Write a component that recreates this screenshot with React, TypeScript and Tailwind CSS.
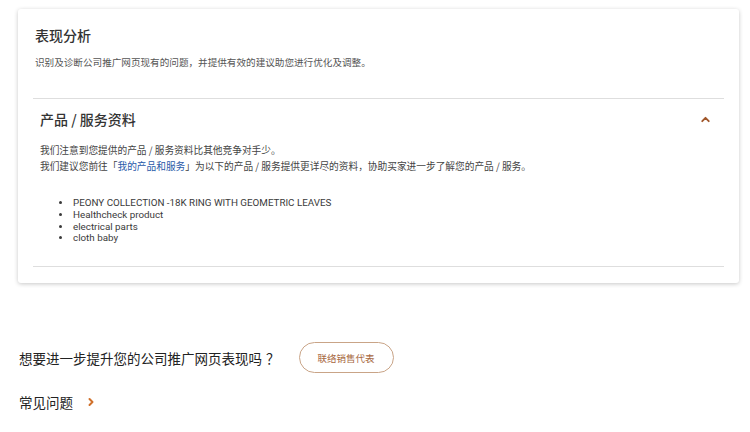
import { ChevronUp, ChevronRight } from "lucide-react";

const PRODUCTS = [
  "PEONY COLLECTION -18K RING WITH GEOMETRIC LEAVES",
  "Healthcheck product",
  "electrical parts",
  "cloth baby",
];

const CJK = "font-['Microsoft_YaHei','Noto_Sans_CJK_SC',sans-serif]";

export default function App() {
  return (
    <div className={`min-h-screen bg-white ${CJK} text-[#333]`}>
      <div className="pl-[18px] pr-[11px] pt-[9px]">
        {/* ── Analysis card ─────────────────────────────── */}
        <section className="rounded-[3px] bg-white px-[15px] pt-[16px] pb-[16px] shadow-[0_1px_4px_rgba(0,0,0,0.22)]">
          <h2 className="pl-[2px] text-[14px] font-medium leading-[20px] text-[#333]">表现分析</h2>
          <p className="mt-[10px] pl-[2px] text-[9.6px] leading-[14px] text-[#555]">
            识别及诊断公司推广网页现有的问题，并提供有效的建议助您进行优化及调整。
          </p>

          <div className="mt-[29px] border-t border-[#dedede]">
            <div className="flex items-center justify-between pt-[10px] pl-[7px] pr-[12px]">
              <h3 className="text-[14px] font-medium leading-[20px] text-[#333]">产品 / 服务资料</h3>
              <ChevronUp className="h-[13px] w-[13px] text-[#a0562a]" strokeWidth={3.5} />
            </div>

            <div className="mt-[13px] pl-[7px] text-[9.7px] leading-[16px] text-[#444]">
              <p>我们注意到您提供的产品 / 服务资料比其他竞争对手少。</p>
              <p>
                我们建议您前往「<span className="text-[#2a5aa8]">我的产品和服务</span>」为以下的产品 / 服务提供更详尽的资料，协助买家进一步了解您的产品 / 服务。
              </p>
            </div>

            <ul className="mt-[23px] mb-[22px] list-disc pl-[39px] font-['Roboto',sans-serif] text-[9.8px] leading-[11.8px] text-[#3a3a3a]">
              {PRODUCTS.map((p) => (
                <li key={p} className="pl-[1px]">{p}</li>
              ))}
            </ul>
          </div>
          <div className="border-t border-[#dedede]" />
        </section>
      </div>

      {/* ── Bottom CTA ────────────────────────────────── */}
      <div className="pl-[19px] pt-[59px]">
        <div className="flex items-center gap-[19px]">
          <span className="text-[13.5px] leading-[20px] text-[#222]">
            想要进一步提升您的公司推广网页表现吗<span className="ml-[4px]">？</span>
          </span>
          <button className="flex h-[31px] w-[95px] items-center justify-center rounded-full border border-[#c9a487] text-[9.5px] text-[#a8683f]">
            联络销售代表
          </button>
        </div>
        <div className="mt-[19px] flex items-center gap-[12px]">
          <span className="text-[13.5px] leading-[20px] text-[#222]">常见问题</span>
          <ChevronRight className="h-[12px] w-[12px] text-[#d0702a]" strokeWidth={4} />
        </div>
      </div>
    </div>
  );
}
